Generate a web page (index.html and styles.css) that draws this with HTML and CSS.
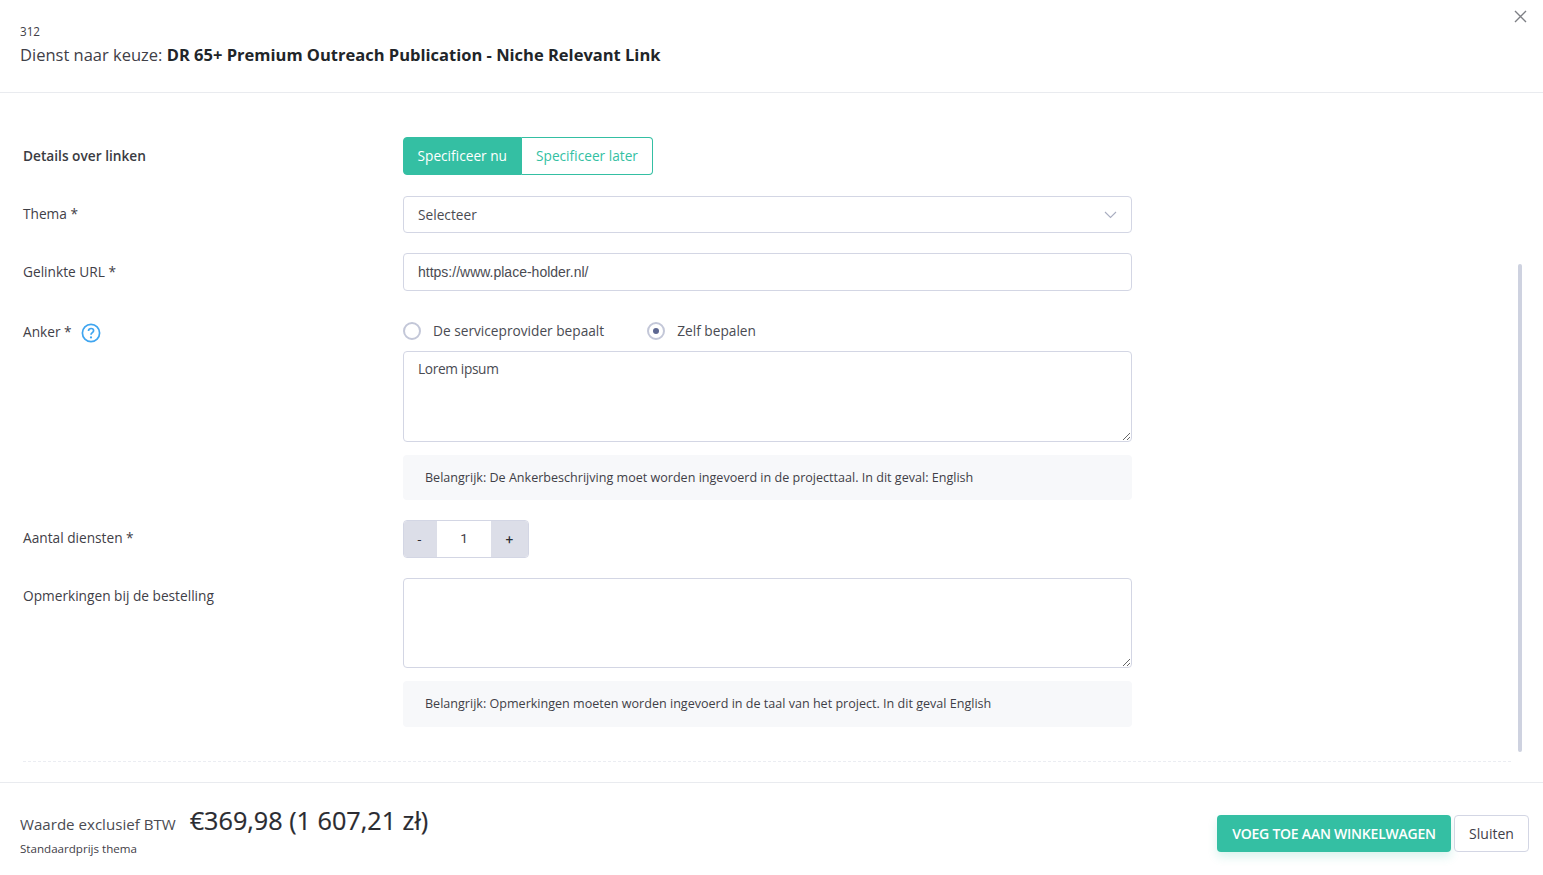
FILE: index.html
```html
<!DOCTYPE html>
<html lang="nl">
<head>
<meta charset="utf-8">
<title>Dienst naar keuze</title>
<link rel="stylesheet" href="styles.css">
</head>
<body>
<div class="modal">
  <header class="modal-head">
    <div class="order-id">312</div>
    <h1 class="title">Dienst naar keuze: <strong>DR 65+ Premium Outreach Publication - Niche Relevant Link</strong></h1>
    <button class="close" type="button" aria-label="Sluiten">
      <svg width="13" height="13" viewBox="0 0 13 13"><path d="M1 1l11 11M12 1L1 12" stroke="#7d7f85" stroke-width="1.4" fill="none"/></svg>
    </button>
  </header>

  <main class="modal-body">
    <div class="scrollbar"></div>
    <form class="form">
      <div class="row row-toggle">
        <div class="label label-strong">Details over linken</div>
        <div class="control toggle">
          <span class="toggle-btn is-active">Specificeer nu</span>
          <span class="toggle-btn">Specificeer later</span>
        </div>
      </div>
      <div class="row row-select">
        <div class="label">Thema *</div>
        <div class="control select">
          <span>Selecteer</span>
          <svg width="13" height="8" viewBox="0 0 13 8"><path d="M1 1l5.500 5.500L12 1" stroke="#a9adc0" stroke-width="1.100" fill="none"/></svg>
        </div>
      </div>
      <div class="row row-url">
        <div class="label">Gelinkte URL *</div>
        <div class="control"><input class="input" type="text" value="https://www.place-holder.nl/"></div>
      </div>
      <div class="row row-anchor">
        <div class="label label-help">
          <span>Anker *</span>
          <svg class="help" width="20" height="20" viewBox="0 0 20 20"><circle cx="10" cy="10" r="8.600" fill="none" stroke="#3fa5f0" stroke-width="1.700"/><path d="M7.500 8c0-1.500 1.100-2.500 2.600-2.500s2.500.9 2.500 2.300c0 1.900-2.600 1.900-2.600 3.900" fill="none" stroke="#3fa5f0" stroke-width="1.700"/><circle cx="10" cy="14.400" r="1.100" fill="#3fa5f0"/></svg>
        </div>
        <div class="control control-anchor">
          <div class="radios">
            <span class="radio"><i class="dot"></i>De serviceprovider bepaalt</span>
            <span class="radio"><i class="dot is-on"></i>Zelf bepalen</span>
          </div>
          <textarea class="area area-anchor">Lorem ipsum</textarea>
          <div class="note">Belangrijk: De Ankerbeschrijving moet worden ingevoerd in de projecttaal. In dit geval: English</div>
        </div>
      </div>
      <div class="row row-qty">
        <div class="label">Aantal diensten *</div>
        <div class="control stepper">
          <span class="step step-minus">-</span>
          <span class="qty">1</span>
          <span class="step step-plus">+</span>
        </div>
      </div>
      <div class="row row-remarks">
        <div class="label">Opmerkingen bij de bestelling</div>
        <div class="control">
          <textarea class="area area-remarks"></textarea>
          <div class="note">Belangrijk: Opmerkingen moeten worden ingevoerd in de taal van het project. In dit geval English</div>
        </div>
      </div>
      <div class="dashed"></div>
    </form>
  </main>

  <footer class="modal-foot">
    <div class="price-block">
      <div class="price-line">
        <span class="price-label">Waarde exclusief BTW</span>
        <span class="price">€369,98 (1 607,21 zł)</span>
      </div>
      <div class="price-sub">Standaardprijs thema</div>
    </div>
    <div class="actions">
      <button class="btn btn-primary" type="button">VOEG TOE AAN WINKELWAGEN</button>
      <button class="btn btn-plain" type="button">Sluiten</button>
    </div>
  </footer>
</div>
</body>
</html>
```
FILE: styles.css
```css
* { box-sizing: border-box; }
html, body { margin: 0; height: 100%; overflow: hidden; }
body {
  background: #fff;
  color: #3f4047;
  font-family: "Open Sans", "Liberation Sans", sans-serif;
  font-size: 13.700px;
}
.modal { height: 875px; display: flex; flex-direction: column; position: relative; }

.modal-head {
  height: 93px;
  flex: none;
  padding: 23px 20px 0;
  border-bottom: 1px solid #e9ebef;
  position: relative;
}
.order-id { font-size: 11.700px; line-height: 16px; color: #3f4047; }
.title {
  margin: 4px 0 0;
  font-size: 16.500px;
  line-height: 24px;
  font-weight: 400;
  color: #3f4047;
}
.title strong { font-weight: 700; color: #212529; }
.close {
  position: absolute;
  top: 10px;
  right: 16px;
  padding: 0;
  border: 0;
  background: none;
  line-height: 0;
}

.modal-body { flex: 1; position: relative; padding: 44px 32px 0 23px; overflow: hidden; }
.scrollbar {
  position: absolute;
  left: 1518px;
  top: 171px;
  width: 4px;
  height: 488px;
  border-radius: 2px;
  background: #ced2e0;
}
.row { display: grid; grid-template-columns: 380px 729px; }
.label { line-height: 20px; color: #3f4047; }
.label-strong { font-weight: 600; color: #3a3b42; padding-top: 9px; }
.row-toggle { margin-bottom: 21px; }
.row-select { margin-bottom: 20px; }
.row-select .label { padding-top: 8px; }
.row-url { margin-bottom: 29px; }
.row-url .label { padding-top: 9px; }
.row-anchor { margin-bottom: 20px; }
.control-anchor { padding-top: 2px; }
.label-help { display: flex; align-items: flex-start; padding-top: 2px; }
.help { margin: 1px 0 0 9.500px; }
.row-qty { margin-bottom: 20px; }
.row-qty .label { padding-top: 8px; }
.row-remarks .label { padding-top: 8px; }

.toggle { display: flex; height: 38px; width: 250px; }
.toggle-btn {
  height: 38px;
  padding: 0 14px 2px;
  display: flex;
  align-items: center;
  white-space: nowrap;
  color: #34bfa3;
  border: 1px solid #34bfa3;
  border-left: 0;
  border-radius: 0 4px 4px 0;
  flex: 1;
}
.toggle-btn.is-active {
  flex: none;
  width: 119px;
  padding-left: 13.500px;
  background: #34bfa3;
  color: #fff;
  border-left: 1px solid #34bfa3;
  border-radius: 4px 0 0 4px;
}

.select {
  height: 37px;
  padding: 0 14px;
  border: 1px solid #d3d6e4;
  border-radius: 4px;
  display: flex;
  align-items: center;
  justify-content: space-between;
  color: #4a4b52;
}
.input {
  display: block;
  width: 100%;
  height: 38px;
  padding: 0 14px;
  border: 1px solid #d3d6e4;
  border-radius: 4px;
  background: #fff;
  font-family: "Liberation Sans", Arial, sans-serif;
  font-size: 14px;
  color: #4a4b52;
  outline: none;
}
.radios { display: flex; align-items: center; gap: 43px; height: 18px; margin-bottom: 11px; }
.radio { display: flex; align-items: center; gap: 12px; line-height: 18px; color: #4a4b52; }
.dot {
  width: 18px;
  height: 18px;
  border: 2px solid #c3c7d8;
  border-radius: 50%;
  display: flex;
  align-items: center;
  justify-content: center;
  flex: none;
}
.dot.is-on::after {
  content: "";
  width: 6px;
  height: 6px;
  border-radius: 50%;
  background: #5d6791;
}
.area {
  display: block;
  width: 100%;
  padding: 7px 14px;
  border: 1px solid #d3d6e4;
  border-radius: 4px;
  background: #fff;
  font-family: "Open Sans", "Liberation Sans", sans-serif;
  font-size: 13.700px;
  letter-spacing: -.35px;
  line-height: 20px;
  color: #4a4b52;
  outline: none;
}
.area-anchor { height: 91px; }
.area-remarks { height: 90px; }
.note {
  margin-top: 13px;
  height: 45px;
  padding: 0 22px 1px;
  display: flex;
  align-items: center;
  border-radius: 4px;
  background: #f7f8fa;
  font-size: 12.570px;
  color: #3f4047;
}
.row-remarks .note { height: 46px; }

.stepper {
  display: flex;
  width: 126px;
  height: 38px;
  border: 1px solid #d3d6e4;
  border-radius: 4px;
  overflow: hidden;
  font-family: "Roboto", "Liberation Sans", sans-serif;
}
.step {
  width: 33px;
  background: #dcdee8;
  display: flex;
  align-items: center;
  justify-content: center;
  color: #2b2c33;
}
.step-minus { padding-right: 2px; }
.step-plus { width: 37px; }
.qty {
  flex: 1;
  display: flex;
  align-items: center;
  justify-content: center;
  padding-bottom: 2px;
  color: #3f4047;
}
.dashed { margin-top: 34px; width: 1488px; border-top: 1px dashed #ebedf2; }

.modal-foot {
  height: 93px;
  flex: none;
  border-top: 1px solid #e9ebef;
  padding: 20px 14px 0 20px;
  display: flex;
  justify-content: space-between;
}
.price-line { display: flex; align-items: baseline; gap: 14px; height: 38px; }
.price-label { font-size: 15.100px; color: #4a4b52; }
.price { font-size: 25.200px; font-weight: 400; color: #2a2b31; -webkit-text-stroke: .2px #2a2b31; }
.price-sub { font-size: 11.600px; line-height: 16px; color: #3f4047; }
.actions { display: flex; gap: 3px; padding-top: 12px; }
.btn {
  height: 37px;
  border-radius: 4px;
  font-family: "Open Sans", "Liberation Sans", sans-serif;
  font-size: 14px;
  padding: 0 14px;
}
.btn-primary {
  width: 234px;
  border: 0;
  background: #34bfa3;
  color: #fff;
  font-weight: 600;
  letter-spacing: -.23px;
  box-shadow: 0 5px 10px rgba(52, 191, 163, .19);
}
.btn-plain {
  width: 75px;
  border: 1px solid #d3d6e4;
  background: #fff;
  color: #3f4047;
}
```
